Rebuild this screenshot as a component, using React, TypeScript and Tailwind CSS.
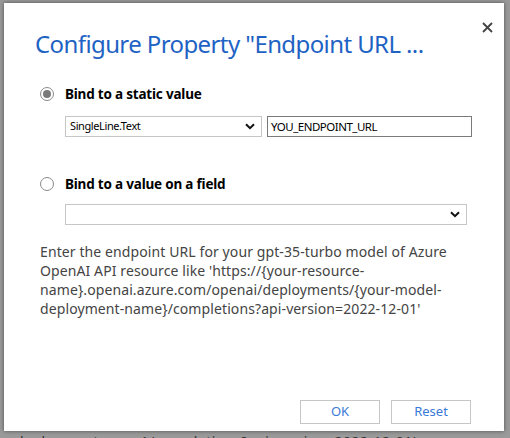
import React from "react";

function Chevron() {
  return (
    <svg width="10" height="7" viewBox="0 0 10 7" className="shrink-0">
      <path d="M1 1.2 L5 5.2 L9 1.2" fill="none" stroke="#111" strokeWidth="2" />
    </svg>
  );
}

export default function App() {
  const font = { fontFamily: '"Noto Sans", "Open Sans", sans-serif' };
  return (
    <div className="w-[510px] h-[438px] bg-[#9a9a9a] relative overflow-hidden" style={font}>
      <div className="absolute left-[15px] top-[431px] text-[14px] text-[#333] whitespace-nowrap tracking-[0.5px]">
        {"deployment-name}/completions?api-version=2022-12-01'"}
      </div>
      <div className="absolute left-[4px] top-[3px] w-[500px] h-[428px] bg-white shadow-[0_0_4px_rgba(0,0,0,0.5)] flex flex-col">
        <div className="flex justify-between pl-[31px] pr-[11px] pt-[26px]">
          <div className="text-[24px] leading-[30px] text-[#1e63c4] font-normal tracking-[-0.6px] whitespace-nowrap">
            Configure Property "Endpoint URL ...
          </div>
          <svg width="11" height="11" viewBox="0 0 11 11" className="mt-[-7px]">
            <path d="M1 1 L10 10 M10 1 L1 10" stroke="#444" strokeWidth="1.8" />
          </svg>
        </div>

        <div className="pl-[36px] pt-[25px] flex flex-col">
          <div className="flex items-center gap-[11px] h-[20px]">
            <div className="w-[14px] h-[14px] rounded-full border border-[#8a8a8a] bg-white flex items-center justify-center">
              <div className="w-[8px] h-[8px] rounded-full bg-[#7a7a7a]" />
            </div>
            <div className="text-[13.5px] font-bold text-black tracking-[-0.2px]">Bind to a static value</div>
          </div>
          <div className="flex gap-[5px] pl-[25px] mt-[12px]">
            <div className="w-[197px] h-[21px] border border-[#c6c6c6] flex items-center justify-between pl-[4px] pr-[6px] text-[11px] text-black">
              <span className="tracking-[-0.4px]">SingleLine.Text</span>
              <Chevron />
            </div>
            <div className="w-[205px] h-[21px] border border-[#7a7a7a] flex items-center pl-[3px] text-[11.5px] text-black tracking-[-0.5px]">
              YOU_ENDPOINT_URL
            </div>
          </div>

          <div className="flex items-center gap-[11px] h-[20px] mt-[37px]">
            <div className="w-[14px] h-[14px] rounded-full border border-[#8a8a8a] bg-white" />
            <div className="text-[13.5px] font-bold text-black tracking-[-0.2px]">Bind to a value on a field</div>
          </div>
          <div className="pl-[25px] mt-[10px]">
            <div className="w-[402px] h-[21px] border border-[#c6c6c6] flex items-center justify-end pr-[6px]">
              <Chevron />
            </div>
          </div>
        </div>

        <div className="pl-[36px] mt-[17px] text-[14px] leading-[19px] text-[#444] whitespace-nowrap tracking-[0.1px]">
          <div>Enter the endpoint URL for your gpt-35-turbo model of Azure</div>
          <div>{"OpenAI API resource like 'https://{your-resource-"}</div>
          <div>{"name}.openai.azure.com/openai/deployments/{your-model-"}</div>
          <div>{"deployment-name}/completions?api-version=2022-12-01'"}</div>
        </div>

        <div className="flex justify-end gap-[11px] pr-[33px] mt-auto mb-[7px]">
          <div className="w-[80px] h-[24px] border border-[#c6c6c6] flex items-center justify-center text-[13px] text-[#3a7ad8]">
            OK
          </div>
          <div className="w-[80px] h-[24px] border border-[#c6c6c6] flex items-center justify-center text-[13px] text-[#3a7ad8]">
            Reset
          </div>
        </div>
      </div>
    </div>
  );
}
